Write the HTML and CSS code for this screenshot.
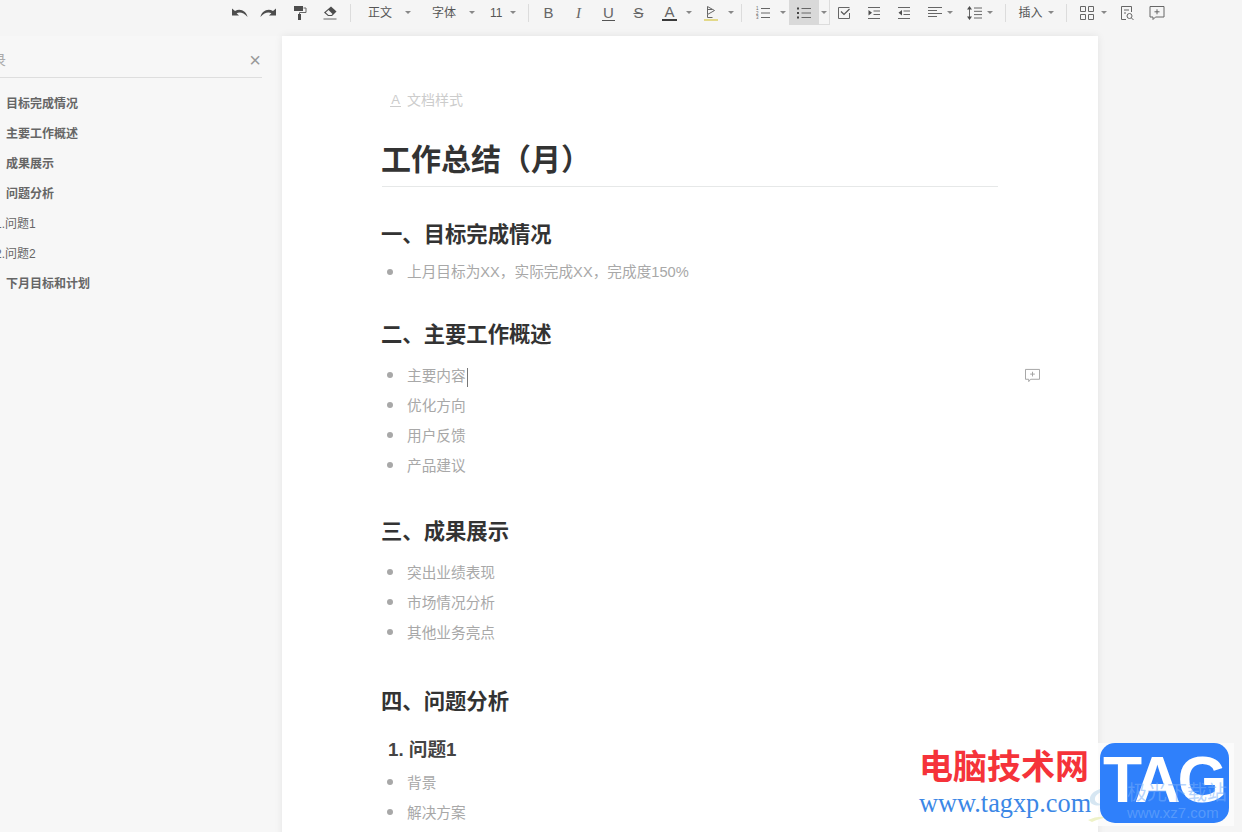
FILE: index.html
```html
<!DOCTYPE html>
<html lang="zh">
<head>
<meta charset="utf-8">
<title>工作总结（月）</title>
<link rel="stylesheet" href="styles.css">
</head>
<body>
<div class="app">
  <div class="toolbar">
    <div class="cell w28"><svg class="ic-wide" viewBox="0 0 18 12"><path class="solid" d="M1 1.500v7h7L5.600 6.300C8 4.600 12.500 5 16.600 10 15.300 4.200 9.500 .8 4 3.900Z"/></svg></div>
    <div class="cell w28"><svg class="ic-wide" viewBox="0 0 18 12"><path class="solid" d="M17 1.500v7h-7l2.400-2.200C10 4.600 5.500 5 1.400 10 2.700 4.200 8.500 .8 14 3.900Z"/></svg></div>
    <div class="cell w36"><svg class="ic" viewBox="0 0 16 16"><path class="solid" d="M2 1h9v5H2z"/><path class="line" d="M11.500 3H14v4.500H7.500V9"/><path class="solid" d="M6 9h3v6H6z"/></svg></div>
    <div class="cell w24"><svg class="ic" viewBox="0 0 16 16"><path class="solid" d="M9 1.500 14.500 6.500 10 11H6L2 7.500Z"/><path class="white" d="M6.500 5 10.500 9 9.500 10H6.500L3.800 7.500Z"/><path class="line" d="M1.500 14h13"/></svg></div>
    <div class="cell w16"><span class="sep"></span></div>

    <div class="combo pl10 pr7"><span class="tb-text">正文</span><span class="caret ml13"></span></div>
    <div class="combo pl14 pr7"><span class="tb-text">字体</span><span class="caret ml13"></span></div>
    <div class="combo pl8 pr5"><span class="tb-text">11</span><span class="caret ml7"></span></div>
    <div class="cell w16"><span class="sep"></span></div>

    <div class="cell w24"><span class="fmt">B</span></div>
    <div class="cell w36"><span class="fmt fmt-i">I</span></div>
    <div class="cell w24"><span class="fmt fmt-u">U</span></div>
    <div class="cell w36"><span class="fmt fmt-s">S</span></div>
    <div class="cell w26"><span class="fmt fmt-a">A</span></div>
    <div class="cell w12"><span class="caret"></span></div>
    <div class="cell w32"><svg class="ic" viewBox="0 0 16 16"><path class="line" d="M4.500 1.500 11.500 5.500 4.500 9.500Z"/><path class="line" d="M4.500 4.500 9 4.500M4.500 9.500v3h5"/><path class="hl" d="M1 15h14"/></svg></div>
    <div class="cell w8"><span class="caret"></span></div>
    <div class="cell w14"><span class="sep"></span></div>

    <div class="cell w28"><svg class="ic" viewBox="0 0 16 16"><text class="mini" x="1" y="5">1</text><text class="mini" x="1" y="9.500">2</text><text class="mini" x="1" y="14">3</text><path class="line" d="M6 3.500h9M6 8h9M6 12.500h9"/></svg></div>
    <div class="cell w12"><span class="caret"></span></div>
    <div class="cell w30 active"><svg class="ic" viewBox="0 0 16 16"><path class="dots" d="M1 3.500h2M1 8h2M1 12.500h2"/><path class="line" d="M5.500 3.500H15M5.500 8H15M5.500 12.500H15"/></svg></div>
    <div class="cell w11 active-side"><span class="caret"></span></div>
    <div class="cell w28"><svg class="ic" viewBox="0 0 16 16"><path class="line" d="M13.500 8v5.500h-11v-11h11"/><path class="line-b" d="M5 6.500 8 9.500 13.500 4"/></svg></div>
    <div class="cell w32"><svg class="ic" viewBox="0 0 16 16"><path class="line" d="M2 2.500h12M7.500 6H14M7.500 9.500H14M2 13.500h12"/><path class="solid" d="M2.500 5v5.500L6 7.700Z"/></svg></div>
    <div class="cell w28"><svg class="ic" viewBox="0 0 16 16"><path class="line" d="M2 2.500h12M7.500 6H14M7.500 9.500H14M2 13.500h12"/><path class="solid" d="M6 5v5.500L2.500 7.700Z"/></svg></div>
    <div class="combo w-align"><svg class="ic" viewBox="0 0 16 16"><path class="line" d="M1 2.500h14M1 5.500h9M1 8.500h14M1 11.500h9"/></svg><span class="caret ml4"></span></div>
    <div class="combo w-lh"><svg class="ic" viewBox="0 0 16 16"><path class="line" d="M3.500 2v12"/><path class="solid" d="M1 4.500 3.500 1 6 4.500ZM1 11.500 3.500 15 6 11.500Z"/><path class="line" d="M8 3h8M8 6.300h8M8 9.600h8M8 13h8"/></svg><span class="caret ml5"></span></div>
    <div class="cell w14"><span class="sep"></span></div>
    <div class="combo pl6 pr5"><span class="tb-text">插入</span><span class="caret ml5"></span></div>
    <div class="cell w16"><span class="sep"></span></div>
    <div class="combo pl4 pr4"><svg class="ic" viewBox="0 0 16 16"><path class="line" d="M1.500 1.500h5v5h-5zM9.500 1.500h5v5h-5zM1.500 9.500h5v5h-5zM9.500 9.500h5v5h-5z"/></svg><span class="caret ml6"></span></div>
    <div class="cell w32"><svg class="ic" viewBox="0 0 16 16"><path class="line" d="M7 14.500H2.500v-13h10V7"/><path class="line" d="M5 5h5M5 8h2"/><circle class="line" cx="10.500" cy="11" r="2.500"/><path class="line" d="m12.500 13 2 2"/></svg></div>
    <div class="cell w28"><svg class="ic" viewBox="0 0 16 16"><path class="line" d="M1 1.500h14v10.500H6.500L4 14.500V12H1z"/><path class="line" d="M8 4.300v5M5.500 6.800h5"/></svg></div>
  </div>

  <div class="main">
    <aside class="sidebar">
      <div class="outline">
        <div class="outline-head"><span class="outline-title">目录</span><span class="close">×</span></div>
        <ul class="outline-list">
          <li class="outline-item">目标完成情况</li>
          <li class="outline-item">主要工作概述</li>
          <li class="outline-item">成果展示</li>
          <li class="outline-item">问题分析</li>
          <li class="outline-sub">1.问题1</li>
          <li class="outline-sub">2.问题2</li>
          <li class="outline-item">下月目标和计划</li>
        </ul>
      </div>
    </aside>

    <main class="page">
      <div class="doc-style"><span class="doc-style-a">A</span>文档样式</div>
      <h1 class="title">工作总结（月）</h1>

      <section class="sec sec1">
        <h2 class="h2">一、目标完成情况</h2>
        <ul class="list list-tight"><li>上月目标为XX，实际完成XX，完成度150%</li></ul>
      </section>

      <section class="sec sec2">
        <h2 class="h2">二、主要工作概述</h2>
        <ul class="list">
          <li>主要内容<span class="cursor"></span>
            <svg class="comment" viewBox="0 0 16 16"><path class="line-light" d="M.5 1.500h15v10.500H6L4 14.500V12H.5z"/><path class="line-light" d="M8 4v5M5.500 6.500h5"/></svg>
          </li>
          <li>优化方向</li>
          <li>用户反馈</li>
          <li>产品建议</li>
        </ul>
      </section>

      <section class="sec sec3">
        <h2 class="h2">三、成果展示</h2>
        <ul class="list">
          <li>突出业绩表现</li>
          <li>市场情况分析</li>
          <li>其他业务亮点</li>
        </ul>
      </section>

      <section class="sec sec4">
        <h2 class="h2">四、问题分析</h2>
        <h3 class="h3">1. 问题1</h3>
        <ul class="list list-flush">
          <li>背景</li>
          <li>解决方案</li>
        </ul>
      </section>
    </main>
  </div>

  <div class="mark">
    <div class="mark-cn">电脑技术网</div>
    <div class="mark-url">www.tagxp.com</div>
    <div class="mark-bg"></div>
    <svg class="mark-swirl" viewBox="0 0 30 40"><path d="M30 6C14 2 2 10 4 18c1 5 10 6 18 2C14 22 8 20 9 15 10 10 18 7 30 6Z"/><path class="mark-swirl-y" d="M2 37c6-3 12-4 20-3-6 1-12 3-16 5Z"/></svg>
    <div class="mark-badge">
      <span class="mark-tag">TAG</span>
      <span class="mark-faint">极光下载站</span>
      <span class="mark-faint2">www.xz7.com</span>
    </div>
  </div>
</div>
</body>
</html>
```

FILE: styles.css
```css
* { box-sizing: border-box; }
html, body { margin: 0; padding: 0; }
body {
  background: #f5f5f5;
  font-family: "Liberation Sans", "Noto Sans CJK SC", sans-serif;
  color: #333;
}
ul { list-style: none; margin: 0; padding: 0; }
h1, h2, h3 { margin: 0; }

.app {
  position: relative;
  width: 1242px;
  height: 832px;
  overflow: hidden;
  display: flex;
  flex-direction: column;
}

/* toolbar */
.toolbar {
  flex: none;
  height: 36px;
  display: flex;
  align-items: flex-start;
  padding-left: 226px;
  background: #f5f5f5;
}
.cell, .combo {
  height: 25px;
  display: flex;
  align-items: center;
  flex: none;
}
.cell { justify-content: center; }
.w8 { width: 8px; }
.w11 { width: 11px; }
.w12 { width: 12px; }
.w14 { width: 14px; }
.w16 { width: 16px; }
.w24 { width: 24px; }
.w26 { width: 26px; }
.w28 { width: 28px; }
.w30 { width: 30px; }
.w32 { width: 32px; }
.w36 { width: 36px; }
.pl4 { padding-left: 4px; }
.pl6 { padding-left: 6px; }
.pl8 { padding-left: 8px; }
.pl10 { padding-left: 10px; }
.pl14 { padding-left: 14px; }
.pr4 { padding-right: 4px; }
.pr5 { padding-right: 5px; }
.pr7 { padding-right: 7px; }
.ml4 { margin-left: 4px; }
.ml5 { margin-left: 5px; }
.ml6 { margin-left: 6px; }
.ml7 { margin-left: 7px; }
.ml13 { margin-left: 13px; }
.w-align { padding-left: 9px; padding-right: 5px; }
.w-lh { padding-left: 8px; padding-right: 6px; }

.active { background: #d9d9d9; }
.active-side {
  background: #f5f5f5;
  border: 1px solid #dcdcdc;
  border-left: none;
  border-top: none;
}
.sep {
  display: block;
  width: 1px;
  height: 18px;
  background: #dcdcdc;
}
.caret {
  display: block;
  flex: none;
  width: 0;
  height: 0;
  border-left: 3px solid transparent;
  border-right: 3px solid transparent;
  border-top: 3px solid #888;
}
.tb-text {
  padding-top: 1px;
  font-size: 12px;
  line-height: 24px;
  color: #555;
  white-space: nowrap;
}

.ic { width: 16px; height: 16px; display: block; flex: none; }
.ic-wide { width: 18px; height: 12px; display: block; flex: none; }
.solid { fill: #4d4d4d; stroke: none; }
.white { fill: #f5f5f5; stroke: none; }
.line { fill: none; stroke: #666; stroke-width: 1; }
.line-b { fill: none; stroke: #555; stroke-width: 1.200; }
.hl { fill: none; stroke: #e3d98a; stroke-width: 2; }
.dots { fill: none; stroke: #444; stroke-width: 2; }
.mini { font-size: 4.500px; fill: #666; font-family: "Liberation Sans", sans-serif; }

.fmt {
  display: block;
  font-size: 15px;
  line-height: 16px;
  color: #666;
}
.fmt-i { font-family: "Liberation Serif", serif; font-style: italic; }
.fmt-u { border-bottom: 1px solid #555; line-height: 15px; padding: 0 1px; }
.fmt-s { text-decoration: line-through; }
.fmt-a { border-bottom: 2px solid #3a3a3a; line-height: 14px; padding: 0 2px; }

/* main */
.main {
  flex: 1;
  min-height: 0;
  display: flex;
  align-items: flex-start;
}
.sidebar {
  flex: none;
  width: 282px;
  height: 796px;
  overflow: hidden;
  background: #f7f7f7;
}
.outline {
  width: 286px;
  margin-left: -24px;
}
.outline-head {
  height: 42px;
  margin-bottom: 11px;
  padding: 14px 0 0 2px;
  display: flex;
  justify-content: space-between;
  border-bottom: 1px solid #dedede;
  font-size: 14px;
  line-height: 20px;
  color: #aaa;
}
.outline-title { white-space: nowrap; }
.close {
  width: 14px;
  font-size: 20px;
  color: #999;
  text-align: center;
}
.outline-list li {
  height: 30px;
  line-height: 30px;
  font-size: 12px;
  color: #666;
  white-space: nowrap;
}
.outline-item { padding-left: 30px; font-weight: bold; }
.outline-sub { padding-left: 19px; }

/* document */
.page {
  flex: none;
  width: 816px;
  height: 820px;
  padding: 54px 100px 0;
  background: #fff;
  box-shadow: 0 0 8px rgba(0, 0, 0, .08);
}
.doc-style {
  height: 20px;
  padding-left: 8px;
  display: flex;
  align-items: center;
  font-size: 14px;
  line-height: 20px;
  color: #ccc;
}
.doc-style-a {
  width: 11px;
  margin-right: 6px;
  font-size: 13px;
  line-height: 13px;
  border-bottom: 1px solid #ccc;
  text-align: center;
}
.title {
  margin-top: 30px;
  height: 47px;
  padding-bottom: 6px;
  border-bottom: 1px solid #e6e8e8;
  font-size: 30px;
  line-height: 40px;
  font-weight: bold;
  color: #333;
  text-indent: -1px;
}
.h2 {
  font-size: 21.330px;
  line-height: 30px;
  font-weight: bold;
  color: #333;
  text-indent: -1px;
}
.h3 {
  margin-top: 17px;
  padding-left: 6px;
  height: 30px;
  font-size: 18.670px;
  line-height: 32px;
  font-weight: bold;
  color: #444;
}
.sec1 { margin-top: 33px; }
.sec2 { margin-top: 33px; }
.sec3 { margin-top: 37px; }
.sec4 { margin-top: 40px; }
.list { margin-top: 10px; }
.list-tight { margin-top: 7px; }
.list-flush { margin-top: 3px; }
.list li {
  position: relative;
  height: 30px;
  padding-left: 25px;
  font-size: 14.670px;
  line-height: 32px;
  color: #a8a8a8;
  white-space: nowrap;
}
.list-tight li { line-height: 30px; }
.list li::before {
  content: "";
  position: absolute;
  left: 5px;
  top: 12px;
  width: 6px;
  height: 6px;
  border-radius: 50%;
  background: #a8a8a8;
}
.cursor {
  display: inline-block;
  width: 1px;
  height: 19px;
  margin-left: 1px;
  vertical-align: middle;
  background: #777;
}
.comment {
  position: absolute;
  left: 643px;
  top: 8px;
  width: 15px;
  height: 15px;
}
.line-light { fill: none; stroke: #a0a0a0; stroke-width: 1; }

/* watermark */
.mark {
  position: absolute;
  left: 0;
  top: 0;
  width: 0;
  height: 0;
}
.mark-cn {
  position: absolute;
  left: 919px;
  top: 744px;
  font-family: "Noto Sans CJK SC", sans-serif;
  font-size: 34px;
  line-height: 42px;
  font-weight: bold;
  color: #f5333a;
  white-space: nowrap;
}
.mark-url {
  position: absolute;
  left: 919px;
  top: 789px;
  font-family: "Liberation Serif", serif;
  font-size: 26.300px;
  line-height: 30px;
  color: #3b87e6;
  white-space: nowrap;
}
.mark-bg {
  position: absolute;
  left: 1098px;
  top: 743px;
  width: 136px;
  height: 83px;
  background: #fbfbfb;
}
.mark-swirl {
  position: absolute;
  left: 1086px;
  top: 783px;
  width: 30px;
  height: 40px;
  fill: #d6e6f2;
}
.mark-swirl-y { fill: #eef2c8; }
.mark-badge {
  position: absolute;
  left: 1100px;
  top: 743px;
  width: 129px;
  height: 80px;
  border-radius: 15px;
  background: #2f80fb;
  overflow: hidden;
}
.mark-tag {
  position: absolute;
  left: 3px;
  top: 1px;
  font-size: 64px;
  line-height: 72px;
  font-weight: bold;
  letter-spacing: -3px;
  color: #fff;
  white-space: nowrap;
}
.mark-faint {
  position: absolute;
  left: 27px;
  top: 37px;
  font-size: 20px;
  line-height: 26px;
  color: rgba(120, 175, 250, .55);
  white-space: nowrap;
}
.mark-faint2 {
  position: absolute;
  left: 27px;
  top: 61px;
  font-size: 15px;
  line-height: 18px;
  color: rgba(120, 175, 250, .55);
  white-space: nowrap;
}
```
